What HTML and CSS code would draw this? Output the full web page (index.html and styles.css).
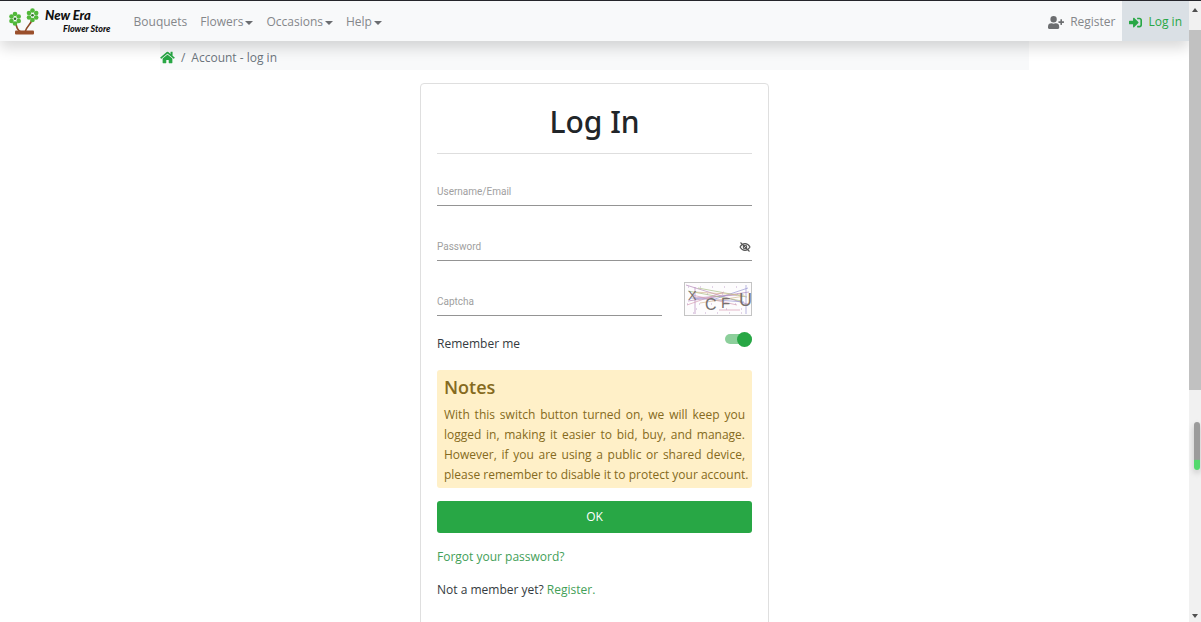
FILE: index.html
```html
<!DOCTYPE html>
<html lang="en">
<head>
<meta charset="utf-8">
<meta name="viewport" content="width=device-width, initial-scale=1">
<title>New Era Flower Store - Log in</title>
<link rel="stylesheet" href="styles.css">
</head>
<body>
<div class="page">
  <header class="navbar">
    <a class="brand" href="#" aria-label="New Era Flower Store">
      <svg class="brand-tree" viewBox="0 0 30 27" aria-hidden="true">
        <g fill="none" stroke="#8c4a28" stroke-width="1.6"><path d="M7 14c0 5 1 8 5 10M23 11c-1 6-5 6-7 13"/></g>
        <rect x="6" y="22.500" width="19" height="4" rx="1" fill="#9a4f2b"/>
        <g fill="#52b83a">
          <circle cx="6" cy="6" r="2.300"/><circle cx="2.500" cy="8.500" r="2.300"/><circle cx="9.700" cy="8.500" r="2.300"/><circle cx="2.500" cy="13" r="2.300"/><circle cx="9.700" cy="13" r="2.300"/><circle cx="6" cy="15.500" r="2.300"/>
          <circle cx="23.500" cy="2.500" r="2.300"/><circle cx="20" cy="5" r="2.300"/><circle cx="27.200" cy="5" r="2.300"/><circle cx="20" cy="9.500" r="2.300"/><circle cx="27.200" cy="9.500" r="2.300"/><circle cx="23.500" cy="12" r="2.300"/>
        </g>
        <g fill="#2d7526"><circle cx="6" cy="10.800" r="1.300"/><circle cx="23.500" cy="7.200" r="1.300"/></g>
      </svg>
      <span class="brand-text"><span class="brand-name">New Era</span><span class="brand-sub">Flower Store</span></span>
    </a>
    <nav class="menu">
      <a href="#">Bouquets</a>
      <a class="has-menu" href="#">Flowers</a>
      <a class="has-menu" href="#">Occasions</a>
      <a class="has-menu" href="#">Help</a>
    </nav>
    <nav class="account">
      <a href="#"><svg class="icon-user" viewBox="0 0 640 512" aria-hidden="true"><path fill="currentColor" d="M624 208h-64v-64c0-9-7-16-16-16h-32c-9 0-16 7-16 16v64h-64c-9 0-16 7-16 16v32c0 9 7 16 16 16h64v64c0 9 7 16 16 16h32c9 0 16-7 16-16v-64h64c9 0 16-7 16-16v-32c0-9-7-16-16-16zM224 256a128 128 0 1 0 0-256 128 128 0 0 0 0 256zm90 32h-17a174 174 0 0 1-146 0h-17A134 134 0 0 0 0 422v42c0 27 21 48 48 48h352c27 0 48-21 48-48v-42a134 134 0 0 0-134-134z"/></svg>Register</a>
      <a class="current" href="#"><svg class="icon-login" viewBox="0 0 512 512" aria-hidden="true"><path fill="currentColor" d="M416 448h-84c-7 0-12-5-12-12v-40c0-7 5-12 12-12h84c18 0 32-14 32-32V160c0-18-14-32-32-32h-84c-7 0-12-5-12-12V76c0-7 5-12 12-12h84c53 0 96 43 96 96v192c0 53-43 96-96 96zm-47-209L201 71c-15-15-41-4-41 17v96H24c-13 0-24 11-24 24v96c0 13 11 24 24 24h136v96c0 22 26 32 41 17l168-168c9-9 9-25 0-34z"/></svg>Log in</a>
    </nav>
  </header>

  <main class="content">
    <nav class="breadcrumb" aria-label="Breadcrumb">
      <a href="#" aria-label="Home"><svg class="icon-home" viewBox="0 0 576 512" aria-hidden="true"><path fill="currentColor" d="M280 148 96 300v164c0 9 7 16 16 16l112 0c9 0 16-7 16-16v-96c0-9 7-16 16-16h64c9 0 16 7 16 16v96c0 9 7 16 16 16h112c9 0 16-7 16-16V300L296 148a12 12 0 0 0-16 0zm292 104-84-69V44c0-7-5-12-12-12h-56c-7 0-12 5-12 12v73l-90-74a48 48 0 0 0-61 0L4 252a12 12 0 0 0-2 16l26 31a12 12 0 0 0 17 2l235-194a12 12 0 0 1 16 0l235 194a12 12 0 0 0 17-2l26-31a12 12 0 0 0-2-16z"/></svg></a>
      <span>/</span>
      <span>Account - log in</span>
    </nav>

    <form class="card">
      <h1>Log In</h1>
      <div class="field"><input type="text" placeholder="Username/Email" aria-label="Username/Email"></div>
      <div class="field">
        <input type="password" placeholder="Password" aria-label="Password">
        <button class="reveal" type="button" aria-label="Show password"><svg viewBox="0 0 24 24" aria-hidden="true"><g fill="none" stroke="currentColor" stroke-width="2.200"><path d="M2 12c5-9 15-9 20 0-5 9-15 9-20 0z"/><circle cx="12" cy="12" r="3.500"/><path d="M3 3l18 18"/></g></svg></button>
      </div>
      <div class="captcha-row">
        <div class="field"><input type="text" placeholder="Captcha" aria-label="Captcha"></div>
        <svg class="captcha" viewBox="0 0 68 34" role="img" aria-label="Captcha image">
          <rect x=".5" y=".5" width="67" height="33" fill="#fdfcfd" stroke="#c4c4c4"/>
          <g fill="none" stroke-width=".7">
            <path stroke="#b48aba" d="M2 3l61 19M4 19l61-9M10 16l43-3M11 5v27"/>
            <path stroke="#a7bf83" d="M4 9l54 10M14 6l49 9"/>
            <path stroke="#d59cb2" d="M8 13l45 10M35 28h21M3 23l37-13"/>
            <path stroke="#9b99d3" d="M7 16l53 4M28 18l36-12M62 3v29"/>
            <path stroke="#d9b894" d="M10 10l50 3M16 21l45-7"/>
          </g>
          <g fill="none" stroke="#b795c4" stroke-width=".8"><path stroke-dasharray="1 11" d="M4 5h60M3 22h62M9 31h54"/><path stroke-dasharray="1 14" d="M8 12h56M12 27h52"/></g>
          <g class="captcha-text"><text x="4" y="18" font-size="13">X</text><text x="21" y="28" font-size="16">C</text><text x="37" y="26" font-size="15">F</text><text x="55" y="24" font-size="18">U</text></g>
        </svg>
      </div>
      <div class="remember"><label for="remember">Remember me</label><input id="remember" class="switch" type="checkbox" role="switch" checked></div>
      <section class="notes">
        <h2>Notes</h2>
        <p>With this switch button turned on, we will keep you logged in, making it easier to bid, buy, and manage. However, if you are using a public or shared device, <span class="keep">please remember to disable it to protect your account.</span></p>
      </section>
      <button class="submit" type="submit">OK</button>
      <p class="line"><a href="#">Forgot your password?</a></p>
      <p class="line">Not a member yet? <a href="#">Register.</a></p>
    </form>
  </main>
</div>
<div class="scrollbar" aria-hidden="true">
  <svg class="arrow" viewBox="0 0 12 12"><path d="M3 8l3-4 3 4z"/></svg>
  <div class="thumb"></div>
  <div class="marker"></div>
  <svg class="arrow arrow-end" viewBox="0 0 12 12"><path d="M3 4l3 4 3-4z"/></svg>
</div>
</body>
</html>
```
FILE: styles.css
```css
* { box-sizing: border-box; }

body {
  margin: 0;
  height: 100vh;
  overflow: hidden;
  display: flex;
  border-top: 1px solid #25252b;
  background: #fff;
  color: #343a40;
  font: 12px/20px "Open Sans", "Noto Sans", sans-serif;
}

a { color: #43a058; text-decoration: none; }

.page { flex: 1; min-width: 0; height: 100%; overflow: hidden; }

.navbar {
  position: relative;
  display: flex;
  align-items: stretch;
  height: 40px;
  background: #f8f9fa;
  box-shadow: 0 7px 14px rgba(0, 0, 0, .15);
}

.brand { display: flex; align-items: center; gap: 6px; padding-left: 9px; color: #111; }
.brand-tree { width: 30px; height: 27px; }
.brand-text { display: flex; flex-direction: column; font-family: Lato, sans-serif; font-style: italic; font-weight: 900; }
.brand-name { font-size: 13px; line-height: 15px; }
.brand-sub { padding-left: 18px; font-size: 9px; line-height: 12px; }

.menu, .account { display: flex; }
.menu { margin-left: 16px; }
.menu a, .account a { display: flex; align-items: center; padding: 2px 7px 0; color: #85878a; }
.menu a { padding-right: 6px; }
.has-menu::after {
  content: "";
  margin: 2px 0 0 2px;
  border: 4px solid transparent;
  border-top-color: #6b6d70;
  border-bottom: 0;
}
.account { margin-left: auto; }
.account svg { margin-right: 6px; }
.icon-user { width: 16px; height: 13px; color: #6c6e70; }
.icon-login { width: 13px; height: 13px; }
.account .current { background: #dae0e5; color: #28a745; }

.content { width: 73.1%; margin: 0 auto; }

.breadcrumb {
  display: flex;
  align-items: center;
  gap: 6px;
  height: 29px;
  padding-top: 4px;
  background: #f8f9fa;
  color: #6c757d;
}
.breadcrumb a { display: flex; color: #28a745; }
.icon-home { width: 15px; height: 13px; }

.card {
  width: 349px;
  margin: 13px auto 0;
  padding: 16px 16px 24px;
  border: 1px solid #dfdfdf;
  border-radius: 4px;
}

h1 {
  margin: 0 0 25px;
  padding-bottom: 9px;
  border-bottom: 1px solid #dedede;
  color: #212529;
  font-family: "Noto Sans", sans-serif;
  font-size: 30px;
  font-weight: 500;
  line-height: 44px;
  text-align: center;
}

.field {
  display: flex;
  align-items: center;
  flex: 1;
  height: 27px;
  margin-bottom: 28px;
  border-bottom: 1px solid #949494;
}
.field input {
  flex: 1;
  min-width: 0;
  padding: 0;
  border: 0;
  outline: 0;
  background: none;
  font: 10px/16px Roboto, sans-serif;
}
.field input::placeholder { color: #a0a0a0; opacity: 1; }
.reveal { display: flex; padding: 0 1px; border: 0; background: none; color: #555; }
.reveal svg { width: 12px; height: 12px; }

.captcha-row { display: flex; gap: 22px; margin-bottom: 13px; }
.captcha-row .field { margin-bottom: 0; }
.captcha { width: 68px; height: 34px; margin-top: -7px; }
.captcha-text { fill: #77706e; font-family: "Liberation Sans", Arial, sans-serif; }

.remember { display: flex; justify-content: space-between; margin: 0 0 16px; padding-top: 5px; }
.switch {
  appearance: none;
  display: flex;
  align-items: center;
  justify-content: flex-end;
  width: 27px;
  height: 10px;
  margin: 0;
  border-radius: 5px;
  background: #8ccf9b;
}
.switch::before { content: ""; width: 15px; height: 15px; border-radius: 50%; background: #28a745; }

.notes { padding: 4px 7px 3px; border-radius: 3px; background: #fff0c8; color: #856a20; }
.notes h2 { margin: 0 0 5px; font-size: 18px; font-weight: 600; line-height: 26px; }
.notes p { margin: 0; text-align: justify; }
.keep { white-space: nowrap; }

.submit {
  display: block;
  width: 100%;
  height: 32px;
  margin: 13px 0 14px;
  border: 0;
  border-radius: 3px;
  background: #28a745;
  color: #fff;
  font: inherit;
}

.line { margin: 0 0 13px; }

.scrollbar {
  display: flex;
  flex-direction: column;
  align-items: center;
  width: 12px;
  background: #f1f1f1;
}
.arrow { flex: none; width: 12px; height: 12px; margin: 3px 0 14px; fill: #505050; }
.thumb { flex: none; width: 100%; height: 58%; background: #c1c1c1; }
.marker {
  width: 6px;
  height: 48px;
  margin: 32px 0 0 3px;
  border-radius: 3px;
  background: linear-gradient(#9b9b9b 78%, #53d96c 79%);
  box-shadow: 0 3px 6px rgba(0, 0, 0, .2);
}
.arrow-end { margin: auto 0 0; }
```
